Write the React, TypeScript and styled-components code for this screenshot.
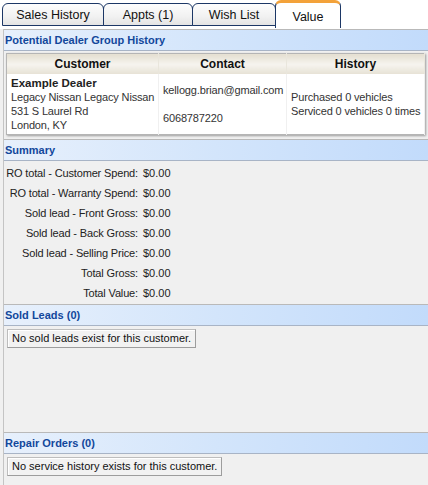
import { Fragment } from "react";
import styled, { createGlobalStyle } from "styled-components";

//styles
const GlobalStyle = createGlobalStyle`
  html, body {
    margin: 0;
    padding: 0;
    background: #f0f0f0;
    font-family: "Liberation Sans", Arial, sans-serif;
    font-size: 11px;
    color: #222;
  }
`;
const TabBar = styled.div`
  display: flex;
  align-items: flex-start;
  height: 29px;
  padding-left: 3px;
  background: #fff;
`;
const Tab = styled.div<{ $w: number; $active?: boolean }>`
  box-sizing: border-box;
  width: ${(p) => p.$w}px;
  margin-top: ${(p) => (p.$active ? 0 : 3)}px;
  height: ${(p) => (p.$active ? 28 : 23)}px;
  display: flex;
  justify-content: center;
  align-items: center;
  padding-top: ${(p) => (p.$active ? 3 : 0)}px;
  font-size: 12.5px;
  color: #111;
  border: 1px solid #1c3766;
  border-top: ${(p) => (p.$active ? "3px solid #f3a23a" : "1px solid #1c3766")};
  border-bottom: ${(p) => (p.$active ? "none" : "1px solid #1c3766")};
  border-radius: 6px 6px 0 0;
  background: ${(p) =>
    p.$active ? "#fff" : "linear-gradient(#fdfdfd, #f1f1f1 60%, #e4e4e4)"};
  margin-left: -1px;
`;
const Page = styled.div`
  margin-left: 3px;
  border-left: 1px solid #c4c4c4;
  min-height: 460px;
`;
const SectionHeader = styled.div`
  height: 20px;
  line-height: 20px;
  padding-left: 1px;
  font-weight: bold;
  font-size: 11px;
  color: #12479b;
  border-top: 1px solid #b9b9b9;
  border-bottom: 1px solid #a8b4c6;
  background: linear-gradient(90deg, #e7f0fc, #d3e5fb 50%, #c2dbfb);
`;
const SectionBody = styled.div<{ $h?: number }>`
  min-height: ${(p) => (p.$h ? `${p.$h}px` : "auto")};
  padding: 2px 6px 0 2px;
`;
const Table = styled.table`
  width: 415px;
  table-layout: fixed;
  border-collapse: collapse;
  background: #fff;
  border: 1px solid #b5b5b5;
  box-shadow: 1px 1px 2px rgba(0, 0, 0, 0.35);
  margin-bottom: 4px;
`;
const Th = styled.th<{ $w: number }>`
  width: ${(p) => p.$w}px;
  height: 20px;
  padding: 0;
  font-size: 12px;
  font-weight: bold;
  color: #111;
  text-align: center;
  border-right: 1px solid #e9e6dc;
  background: linear-gradient(#e4dfd1, #f6f4ef 50%, #e6e1d4);
`;
const Td = styled.td`
  padding: 2px 3px 2px 4px;
  vertical-align: middle;
  line-height: 14px;
  color: #333;
  letter-spacing: -0.15px;
  border-right: 1px solid #f0f0f0;
  white-space: nowrap;
  overflow: visible;
`;
const Name = styled.div`
  font-weight: bold;
  font-size: 11.5px;
  letter-spacing: 0;
  color: #222;
`;
const Summary = styled.div`
  display: grid;
  grid-template-columns: 134px auto;
  column-gap: 5px;
  padding: 2px 0 1px;
`;
const Label = styled.div`
  height: 20px;
  line-height: 20px;
  text-align: right;
  white-space: nowrap;
  letter-spacing: -0.15px;
`;
const Value = styled.div`
  height: 20px;
  line-height: 20px;
`;
const Notice = styled.div`
  display: inline-block;
  margin: 1px 0 0 1px;
  padding: 2px 4px 2px 4px;
  line-height: 13px;
  color: #111;
  background: #f2f2f2;
  border: 1px solid #bdbdbd;
  border-right-color: #9d9d9d;
  border-bottom-color: #9d9d9d;
  box-shadow: inset 1px 1px #fff;
`;

const tabs = [
  { label: "Sales History", w: 102 },
  { label: "Appts (1)", w: 90 },
  { label: "Wish List", w: 84 },
  { label: "Value", w: 66, active: true },
];

const summary = [
  ["RO total - Customer Spend:", "$0.00"],
  ["RO total - Warranty Spend:", "$0.00"],
  ["Sold lead - Front Gross:", "$0.00"],
  ["Sold lead - Back Gross:", "$0.00"],
  ["Sold lead - Selling Price:", "$0.00"],
  ["Total Gross:", "$0.00"],
  ["Total Value:", "$0.00"],
];

const App = () => {
  return (
    <>
      <GlobalStyle />
      <TabBar>
        {tabs.map((t) => (
          <Tab key={t.label} $w={t.w} $active={t.active}>
            {t.label}
          </Tab>
        ))}
      </TabBar>
      <Page>
        <SectionHeader>Potential Dealer Group History</SectionHeader>
        <SectionBody>
          <Table>
            <thead>
              <tr>
                <Th $w={151}>Customer</Th>
                <Th $w={127}>Contact</Th>
                <Th $w={137}>History</Th>
              </tr>
            </thead>
            <tbody>
              <tr>
                <Td>
                  <Name>Example Dealer</Name>
                  Legacy Nissan Legacy Nissan
                  <br />
                  531 S Laurel Rd
                  <br />
                  London, KY
                </Td>
                <Td>
                  kellogg.brian@gmail.com
                  <br />
                  <br />
                  6068787220
                </Td>
                <Td>
                  Purchased 0 vehicles
                  <br />
                  Serviced 0 vehicles 0 times
                </Td>
              </tr>
            </tbody>
          </Table>
        </SectionBody>
        <SectionHeader>Summary</SectionHeader>
        <Summary>
          {summary.map(([l, v]) => (
            <Fragment key={l}>
              <Label>{l}</Label>
              <Value>{v}</Value>
            </Fragment>
          ))}
        </Summary>
        <SectionHeader>Sold Leads (0)</SectionHeader>
        <SectionBody $h={104}>
          <Notice>No sold leads exist for this customer.</Notice>
        </SectionBody>
        <SectionHeader>Repair Orders (0)</SectionHeader>
        <SectionBody>
          <Notice>No service history exists for this customer.</Notice>
        </SectionBody>
      </Page>
    </>
  );
};

export default App;
